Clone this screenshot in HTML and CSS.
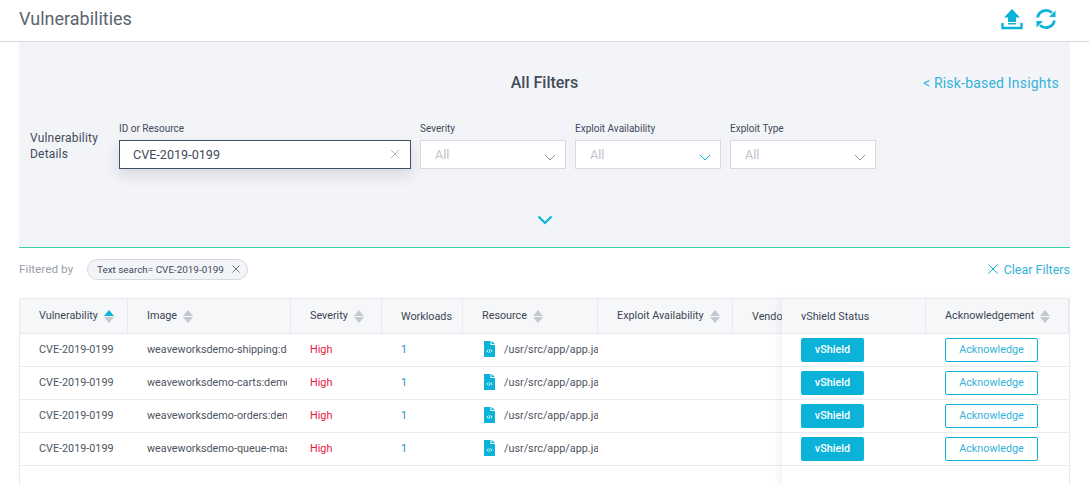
FILE: index.html
```html
<!DOCTYPE html>
<html lang="en">
<head>
    <meta charset="UTF-8">
    <meta name="viewport" content="width=device-width, initial-scale=1.0">
    <title>Vulnerabilities</title>
    <link rel="stylesheet" href="styles.css">
</head>
<body>

<header class="top-bar">
    <h1>Vulnerabilities</h1>
    <div class="top-icons">
        <svg width="22" height="22" viewBox="0 0 22 22"><path d="M11 1 L19 9.5 H15 V14 H7 V9.5 H3 Z M7 15 H15 V16.5 H7 Z" fill="#0bb3d9"/><path d="M1.5 15 V20 H20.5 V15" fill="none" stroke="#0bb3d9" stroke-width="2.4"/></svg>
        <svg width="22" height="22" viewBox="0 0 22 22"><path d="M2.6 9.5 A8.6 8.6 0 0 1 17 4.8" fill="none" stroke="#0bb3d9" stroke-width="2.8"/><path d="M19.4 12.5 A8.6 8.6 0 0 1 5 17.2" fill="none" stroke="#0bb3d9" stroke-width="2.8"/><path d="M20.5 2.5 V9 H14 Z M1.5 19.5 V13 H8 Z" fill="#0bb3d9"/></svg>
    </div>
</header>

<main class="content">
    <section class="filters">
        <h2>All Filters</h2>
        <a class="insights">&lt; Risk-based Insights</a>
        <div class="filter-row">
            <div class="filter-label">Vulnerability<br>Details</div>
            <div class="field field-wide">
                <label>ID or Resource</label>
                <div class="box box-active">CVE-2019-0199<span class="box-x"><svg width="10" height="10" viewBox="0 0 10 10"><path d="M1 1 L9 9 M9 1 L1 9" stroke="#b4b8c2" stroke-width="1"/></svg></span></div>
            </div>
            <div class="field">
                <label>Severity</label>
                <div class="box">All<svg class="caret" width="12" height="7" viewBox="0 0 12 7"><path d="M1 1 L6 6 L11 1" fill="none" stroke="#8a93a3" stroke-width="1"/></svg></div>
            </div>
            <div class="field">
                <label>Exploit Availability</label>
                <div class="box">All<svg class="caret" width="12" height="7" viewBox="0 0 12 7"><path d="M1 1 L6 6 L11 1" fill="none" stroke="#0bb3d9" stroke-width="1"/></svg></div>
            </div>
            <div class="field">
                <label>Exploit Type</label>
                <div class="box">All<svg class="caret" width="12" height="7" viewBox="0 0 12 7"><path d="M1 1 L6 6 L11 1" fill="none" stroke="#8a93a3" stroke-width="1"/></svg></div>
            </div>
        </div>
        <div class="expand">
            <svg width="16" height="10" viewBox="0 0 16 10"><path d="M1.5 1.5 L8 8 L14.5 1.5" fill="none" stroke="#0bb3d9" stroke-width="2.2"/></svg>
        </div>
    </section>

    <div class="filtered-by">
        <span class="filtered-label">Filtered by</span>
        <span class="chip">Text search= CVE-2019-0199<svg width="8" height="8" viewBox="0 0 8 8"><path d="M0.5 0.5 L7.5 7.5 M7.5 0.5 L0.5 7.5" stroke="#6b7280" stroke-width="1"/></svg></span>
        <a class="clear"><svg width="10" height="10" viewBox="0 0 10 10"><path d="M0.5 0.5 L9.5 9.5 M9.5 0.5 L0.5 9.5" stroke="#0bb3d9" stroke-width="1"/></svg>Clear Filters</a>
    </div>

    <div class="table-wrap">
        <div class="table-scroll">
            <table class="main-table">
                <thead>
                    <tr>
                        <th class="c-vuln">Vulnerability<span class="sort sort-on"></span></th>
                        <th class="c-image">Image<span class="sort"></span></th>
                        <th class="c-sev">Severity<span class="sort"></span></th>
                        <th class="c-work">Workloads</th>
                        <th class="c-res">Resource<span class="sort"></span></th>
                        <th class="c-exp">Exploit Availability<span class="sort"></span></th>
                        <th class="c-vend">Vendor</th>
                    </tr>
                </thead>
                <tbody id="mainRows"></tbody>
            </table>
        </div>
        <div class="sticky-cols">
            <table>
                <thead>
                    <tr>
                        <th class="c-shield">vShield Status</th>
                        <th class="c-ack">Acknowledgement<span class="sort"></span></th>
                    </tr>
                </thead>
                <tbody id="stickyRows"></tbody>
            </table>
        </div>
    </div>
</main>

<script>
    const images = ['weaveworksdemo-shipping:demo', 'weaveworksdemo-carts:demo', 'weaveworksdemo-orders:demo', 'weaveworksdemo-queue-master:demo'];
    const fileIcon = '<svg width="11" height="16" viewBox="0 0 11 16"><path d="M0 0 H6.5 V4 H11 V16 H0 Z M7.5 0 L11 3 H7.5 Z" fill="#0bb3d9"/><path d="M4.2 8.6 L2.8 10 L4.2 11.4 M6.8 8.6 L8.2 10 L6.8 11.4 M6 8.4 L5 11.6" fill="none" stroke="#fff" stroke-width="0.8"/></svg>';

    let main = '';
    let sticky = '';
    images.forEach((image) => {
        main += `
            <tr>
                <td>CVE-2019-0199</td>
                <td><div class="clip">${image}</div></td>
                <td class="high">High</td>
                <td class="count">1</td>
                <td><div class="res">${fileIcon}<div class="res-path">/usr/src/app/app.jar</div></div></td>
                <td></td>
                <td></td>
            </tr>`;
        sticky += `
            <tr>
                <td><button class="btn-shield">vShield</button></td>
                <td><button class="btn-ack">Acknowledge</button></td>
            </tr>`;
    });
    document.getElementById('mainRows').innerHTML = main;
    document.getElementById('stickyRows').innerHTML = sticky;
</script>

</body>
</html>
```

FILE: styles.css
```css
html, body {
    height: 100%;
}
body {
    font-family: Roboto, Arial, sans-serif;
    margin: 0;
    background-color: #fff;
    color: #424b5a;
    overflow: hidden;
}
.top-bar {
    display: flex;
    justify-content: space-between;
    align-items: center;
    box-sizing: border-box;
    height: 42px;
    padding: 0 32px 4px 19px;
    border-bottom: 1px solid #d5d8de;
}
.top-bar h1 {
    margin: 0;
    font-size: 18px;
    font-weight: 400;
    color: #5b6370;
}
.top-icons {
    display: flex;
    gap: 12px;
}
.content {
    margin: 0 19px;
}
.filters {
    position: relative;
    box-sizing: border-box;
    height: 206px;
    background-color: #f3f4f8;
    border-bottom: 1px solid #3ad29f;
}
.filters h2 {
    margin: 0;
    padding-top: 31px;
    text-align: center;
    font-size: 16px;
    line-height: 19px;
    font-weight: 500;
}
.insights {
    position: absolute;
    top: 33px;
    right: 11px;
    font-size: 14px;
    line-height: 17px;
    letter-spacing: 0.2px;
    color: #35b2d8;
}
.filter-row {
    display: flex;
    gap: 9px;
    margin-top: 30px;
    padding-left: 11px;
}
.filter-label {
    width: 80px;
    margin-top: 8px;
    font-size: 12px;
    line-height: 16px;
    letter-spacing: 0.2px;
}
.field {
    width: 146px;
}
.field-wide {
    width: 292px;
}
.field label {
    display: block;
    height: 18px;
    font-size: 10px;
    line-height: 14px;
}
.box {
    position: relative;
    box-sizing: border-box;
    height: 29px;
    padding-left: 14px;
    background-color: #fff;
    border: 1px solid #d9dade;
    font-size: 12.6px;
    line-height: 27px;
    color: #c0c4cc;
}
.box-active {
    padding-left: 13px;
    border-color: #3d5266;
    color: #424b5a;
    box-shadow: 0 6px 14px rgba(60, 70, 90, 0.16);
}
.box-x {
    position: absolute;
    top: 8px;
    right: 10px;
    line-height: 10px;
}
.caret {
    position: absolute;
    top: 13px;
    right: 9px;
}
.expand {
    margin-top: 41px;
    text-align: center;
}
.filtered-by {
    display: flex;
    align-items: center;
    height: 42px;
    font-size: 11.8px;
}
.filtered-label {
    width: 68px;
    color: #9a9fa9;
}
.chip {
    display: flex;
    align-items: center;
    gap: 8px;
    box-sizing: border-box;
    width: 161px;
    height: 21px;
    padding-left: 9px;
    background-color: #f3f4f8;
    border: 1px solid #d5d8de;
    border-radius: 11px;
    font-size: 9.9px;
}
.clear {
    display: flex;
    align-items: center;
    gap: 6px;
    margin-left: auto;
    font-size: 12.5px;
    color: #35b2d8;
}
.table-wrap {
    display: flex;
    height: 187px;
    margin-top: 8px;
    border: 1px solid #e9ebf0;
    border-bottom: none;
}
.table-scroll {
    flex: 1;
    min-width: 0;
    overflow: hidden;
}
table {
    border-collapse: separate;
    border-spacing: 0;
    table-layout: fixed;
    font-size: 10.8px;
}
.main-table {
    width: 893px;
}
th, td {
    box-sizing: border-box;
    padding: 0 0 0 19px;
    text-align: left;
    white-space: nowrap;
}
th {
    height: 35px;
    background-color: #f6f7f9;
    border-right: 1px solid #e9ebf0;
    border-bottom: 1px solid #e9ebf0;
    font-weight: 400;
    color: #3c4655;
}
td {
    height: 33px;
    border-bottom: 1px solid #e9ebf0;
    color: #4d5562;
}
.main-table td {
    padding-bottom: 2px;
}
.c-vuln { width: 108px; }
.c-image { width: 163px; }
.c-sev { width: 91px; }
.c-work { width: 81px; }
.c-res { width: 135px; }
.c-exp { width: 135px; }
.c-vend { width: 180px; }
.sort {
    display: inline-block;
    vertical-align: middle;
    width: 0;
    height: 13px;
    margin-left: 6px;
    position: relative;
}
.sort::before, .sort::after {
    content: '';
    position: absolute;
    left: 0;
    border-left: 5.5px solid transparent;
    border-right: 5.5px solid transparent;
}
.sort::before {
    top: 0;
    border-bottom: 6px solid #c5c8d0;
}
.sort::after {
    bottom: 0;
    border-top: 6px solid #c5c8d0;
}
.sort-on::before {
    border-bottom-color: #0bb3d9;
}
.clip {
    width: 140px;
    overflow: hidden;
}
.high {
    color: #e8173f;
}
.main-table .count {
    color: #1f8fc9;
}
.res {
    display: flex;
    align-items: center;
    gap: 9px;
    margin-left: 2px;
}
.res-path {
    width: 94px;
    overflow: hidden;
}
.sticky-cols {
    position: relative;
    width: 287px;
    background-color: #fff;
    box-shadow: -3px 0 6px rgba(90, 100, 120, 0.08);
}
.sticky-cols table {
    width: 287px;
}
.c-shield { width: 144px; }
.c-ack { width: 143px; }
.btn-shield, .btn-ack {
    display: block;
    box-sizing: border-box;
    height: 24px;
    border-radius: 2px;
    font-family: inherit;
    font-size: 10.8px;
    padding: 0 0 2px;
}
.btn-shield {
    width: 63px;
    background-color: #0bb3d9;
    border: none;
    color: #fff;
    font-weight: 500;
}
.btn-ack {
    width: 93px;
    background-color: #fff;
    border: 1px solid #0bb3d9;
    color: #35b2d8;
}
```
